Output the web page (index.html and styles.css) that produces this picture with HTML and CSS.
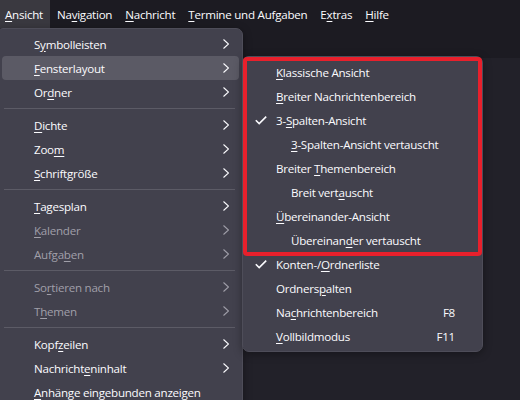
FILE: index.html
```html
<!DOCTYPE html>
<html lang="de">
<head>
    <meta charset="UTF-8">
    <meta name="viewport" content="width=device-width, initial-scale=1.0">
    <title>Ansicht</title>
    <link rel="stylesheet" href="styles.css">
</head>
<body>
    <div class="window">
        <!-- Menüleiste -->
        <nav class="menubar">
            <span class="menubar-item active"><u>A</u>nsicht</span>
            <span class="menubar-item">Na<u>v</u>igation</span>
            <span class="menubar-item"><u>N</u>achricht</span>
            <span class="menubar-item"><u>T</u>ermine und Aufgaben</span>
            <span class="menubar-item">E<u>x</u>tras</span>
            <span class="menubar-item"><u>H</u>ilfe</span>
        </nav>
        <div class="toolbar"></div>
        <div class="pane"></div>

        <!-- Ansicht-Menü -->
        <ul class="menu menu-main">
            <li class="item"><span></span><span class="label">S<u>y</u>mbolleisten</span><svg class="chevron" viewBox="0 0 6 10"><polyline points="0.5,0.5 5.5,5 0.5,9.5" /></svg></li>
            <li class="item hover"><span></span><span class="label"><u>F</u>ensterlayout</span><svg class="chevron" viewBox="0 0 6 10"><polyline points="0.5,0.5 5.5,5 0.5,9.5" /></svg></li>
            <li class="item"><span></span><span class="label">Or<u>d</u>ner</span><svg class="chevron" viewBox="0 0 6 10"><polyline points="0.5,0.5 5.5,5 0.5,9.5" /></svg></li>
            <li class="separator"></li>
            <li class="item"><span></span><span class="label"><u>D</u>ichte</span><svg class="chevron" viewBox="0 0 6 10"><polyline points="0.5,0.5 5.5,5 0.5,9.5" /></svg></li>
            <li class="item"><span></span><span class="label">Zoo<u>m</u></span><svg class="chevron" viewBox="0 0 6 10"><polyline points="0.5,0.5 5.5,5 0.5,9.5" /></svg></li>
            <li class="item"><span></span><span class="label"><u>S</u>chriftgröße</span><svg class="chevron" viewBox="0 0 6 10"><polyline points="0.5,0.5 5.5,5 0.5,9.5" /></svg></li>
            <li class="separator"></li>
            <li class="item"><span></span><span class="label"><u>T</u>agesplan</span><svg class="chevron" viewBox="0 0 6 10"><polyline points="0.5,0.5 5.5,5 0.5,9.5" /></svg></li>
            <li class="item disabled"><span></span><span class="label"><u>K</u>alender</span><svg class="chevron" viewBox="0 0 6 10"><polyline points="0.5,0.5 5.5,5 0.5,9.5" /></svg></li>
            <li class="item disabled"><span></span><span class="label">Aufga<u>b</u>en</span><svg class="chevron" viewBox="0 0 6 10"><polyline points="0.5,0.5 5.5,5 0.5,9.5" /></svg></li>
            <li class="separator"></li>
            <li class="item disabled"><span></span><span class="label">So<u>r</u>tieren nach</span><svg class="chevron" viewBox="0 0 6 10"><polyline points="0.5,0.5 5.5,5 0.5,9.5" /></svg></li>
            <li class="item disabled"><span></span><span class="label">T<u>h</u>emen</span><svg class="chevron" viewBox="0 0 6 10"><polyline points="0.5,0.5 5.5,5 0.5,9.5" /></svg></li>
            <li class="separator"></li>
            <li class="item"><span></span><span class="label">Kopf<u>z</u>eilen</span><svg class="chevron" viewBox="0 0 6 10"><polyline points="0.5,0.5 5.5,5 0.5,9.5" /></svg></li>
            <li class="item"><span></span><span class="label">Nachricht<u>e</u>ninhalt</span><svg class="chevron" viewBox="0 0 6 10"><polyline points="0.5,0.5 5.5,5 0.5,9.5" /></svg></li>
            <li class="item"><span></span><span class="label"><u>A</u>nhänge eingebunden anzeigen</span></li>
        </ul>

        <!-- Untermenü Fensterlayout -->
        <ul class="menu menu-sub">
            <li class="mark-box"></li>
            <li class="item"><span></span><span class="label"><u>K</u>lassische Ansicht</span></li>
            <li class="item"><span></span><span class="label"><u>B</u>reiter Nachrichtenbereich</span></li>
            <li class="item"><svg class="check" viewBox="0 0 12 9"><polyline points="0.8,4.2 4.2,7.6 11.2,0.6" /></svg><span class="label">3-<u>S</u>palten-Ansicht</span></li>
            <li class="item"><span></span><span class="label indent"><u>3</u>-Spalten-Ansicht vertauscht</span></li>
            <li class="item"><span></span><span class="label">Breiter <u>T</u>hemenbereich</span></li>
            <li class="item"><span></span><span class="label indent">Breit vert<u>a</u>uscht</span></li>
            <li class="item"><span></span><span class="label"><u>Ü</u>bereinander-Ansicht</span></li>
            <li class="item"><span></span><span class="label indent">Übereinan<u>d</u>er vertauscht</span></li>
            <li class="item"><svg class="check" viewBox="0 0 12 9"><polyline points="0.8,4.2 4.2,7.6 11.2,0.6" /></svg><span class="label">Konten-/<u>O</u>rdnerliste</span></li>
            <li class="item"><span></span><span class="label">Ordners<u>p</u>alten</span></li>
            <li class="item"><span></span><span class="label">Na<u>c</u>hrichtenbereich</span><span class="accel">F8</span></li>
            <li class="item"><span></span><span class="label"><u>V</u>ollbildmodus</span><span class="accel">F11</span></li>
        </ul>
    </div>
</body>
</html>
```

FILE: styles.css
```css
* {
    box-sizing: border-box;
}

html, body {
    margin: 0;
    height: 100%;
}

body {
    background: #1c1b22;
    color: #fbfbfe;
    font-family: "Open Sans", "Noto Sans", sans-serif;
    font-size: 11.6px;
    letter-spacing: -0.25px;
    overflow: hidden;
}

u {
    text-decoration-thickness: 1px;
    text-underline-offset: 2px;
}

.window {
    position: relative;
    height: 100%;
    display: flex;
    flex-direction: column;
}

/* Menüleiste */
.menubar {
    display: flex;
    height: 28px;
    align-items: stretch;
}

.menubar-item {
    display: flex;
    align-items: center;
    padding: 0 6px;
    margin-right: 1px;
}

.menubar-item:first-child {
    padding-left: 5px;
    padding-right: 7px;
}

.menubar-item.active {
    background: #3a3940;
}

.toolbar {
    height: 30px;
    background: #1c1b22;
}

.pane {
    flex: 1;
    background: #222129;
}

/* Menüs */
.menu {
    position: absolute;
    margin: 0;
    list-style: none;
    background: #42414d;
    border: 1px solid #4e4d59;
    border-radius: 7px;
    box-shadow: 0 2px 8px rgba(0, 0, 0, 0.35);
}

.menu-main {
    left: -4px;
    top: 28px;
    width: 247px;
    padding: 3px 3px 4px 5px;
}

.menu-sub {
    left: 242px;
    top: 56px;
    width: 241px;
    padding: 3px 3px 3px 3px;
}

.item {
    display: grid;
    grid-template-columns: 32px 1fr auto;
    align-items: center;
    height: 24px;
    padding-right: 10px;
    border-radius: 4px;
    white-space: nowrap;
}

.item.hover {
    background: #5b5a65;
}

.item.disabled {
    color: #a09fa9;
}

.menu-sub .item {
    grid-template-columns: 21px 1fr auto;
    padding-left: 9px;
    padding-right: 24px;
}

.label.indent {
    padding-left: 15px;
}

.accel {
    text-align: right;
}

.chevron {
    width: 6px;
    height: 10px;
    fill: none;
    stroke: currentColor;
    stroke-width: 1.1;
}

.check {
    width: 12px;
    height: 9px;
    fill: none;
    stroke: #fbfbfe;
    stroke-width: 1.6;
}

.separator {
    height: 1px;
    margin: 4px 4px 4px 2px;
    background: #5c5b66;
}

/* rote Markierung um die Layout-Einträge */
.mark-box {
    position: absolute;
    left: 0;
    top: 0;
    right: 0;
    height: 199px;
    border: 4px solid #e8202c;
    border-radius: 4px;
    pointer-events: none;
}
```
